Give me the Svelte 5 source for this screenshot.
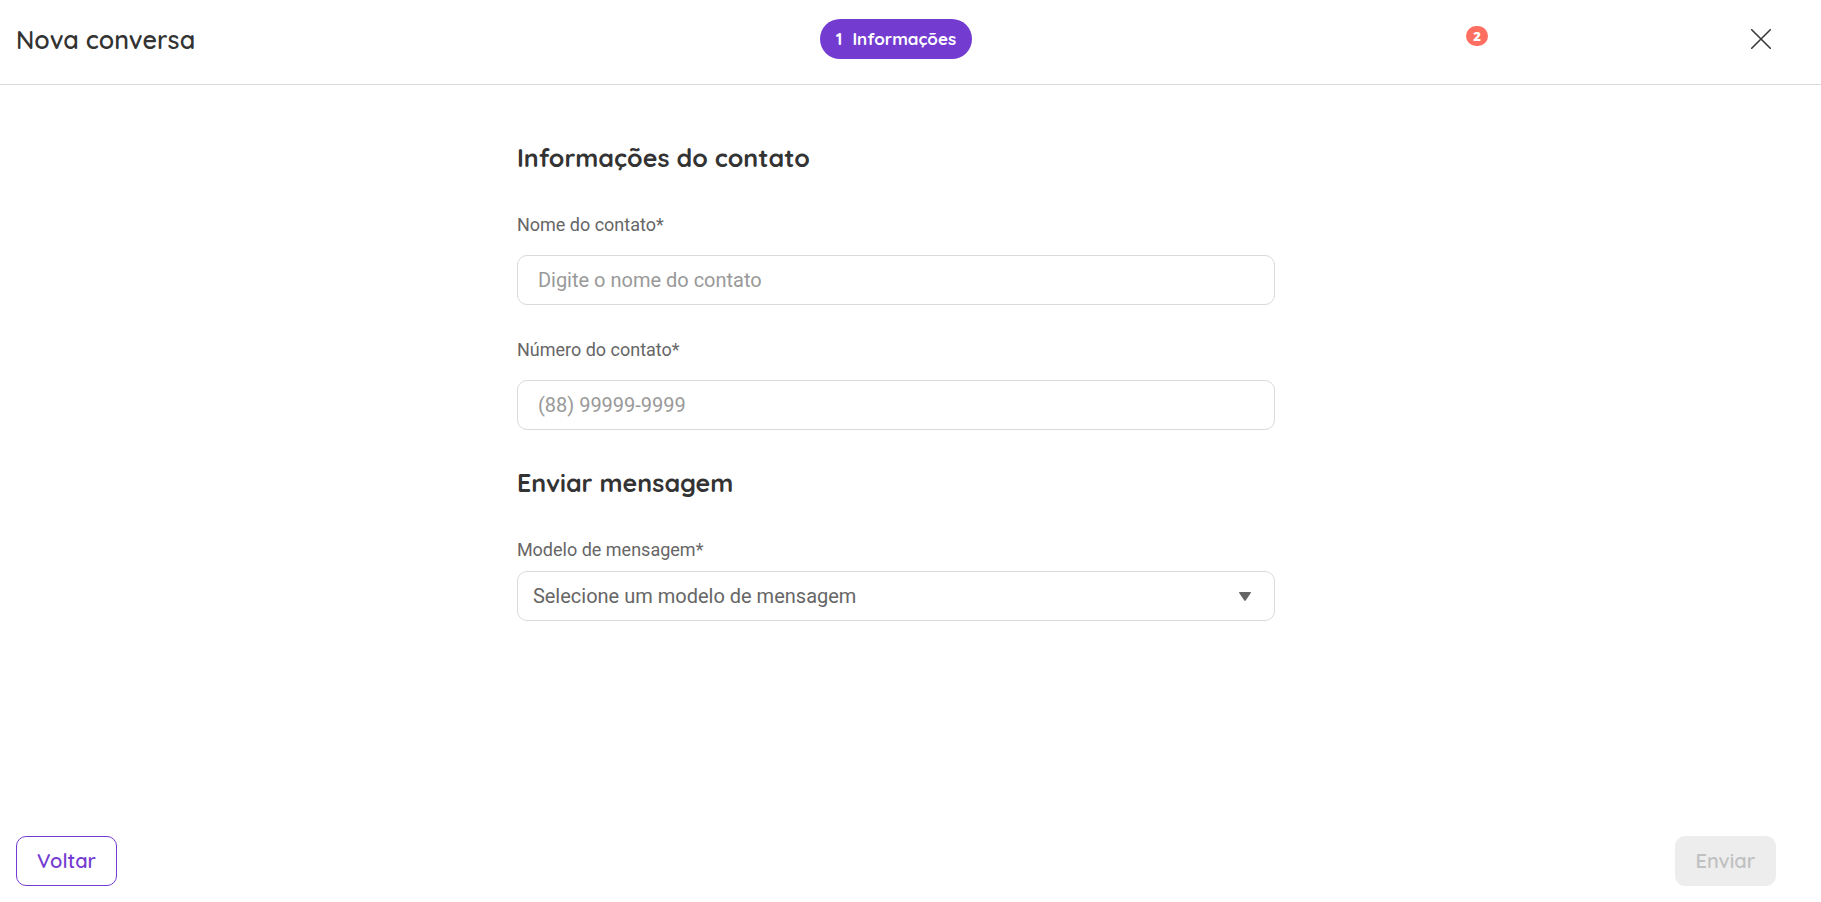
<script>
  let name = $state('');
  let phone = $state('');
  let template = $state('');
  const ready = $derived(name !== '' && phone !== '' && template !== '');
</script>

<div class="page">
  <header class="topbar">
    <h1>Nova conversa</h1>
    <div class="step"><span>1</span><span>Informações</span></div>
    <div class="tools">
      <span class="badge">2</span>
      <button class="close" type="button" aria-label="Fechar">
        <svg viewBox="0 0 20 20" width="20" height="20" aria-hidden="true">
          <path d="M.7.7 19.3 19.3M19.3.7.7 19.3" fill="none" stroke="#3a3a3a" stroke-width="1.6" stroke-linecap="round" />
        </svg>
      </button>
    </div>
  </header>

  <main>
    <form id="conversation">
      <section>
        <h2>Informações do contato</h2>
        <div class="field">
          <label for="name">Nome do contato*</label>
          <input id="name" type="text" placeholder="Digite o nome do contato" bind:value={name} />
        </div>
        <div class="field">
          <label for="phone">Número do contato*</label>
          <input id="phone" type="tel" placeholder="(88) 99999-9999" bind:value={phone} />
        </div>
      </section>
      <section>
        <h2>Enviar mensagem</h2>
        <div class="field compact">
          <label for="template">Modelo de mensagem*</label>
          <div class="select">
            <select id="template" bind:value={template}>
              <option value="">Selecione um modelo de mensagem</option>
            </select>
            <svg viewBox="0 0 12 9" width="12" height="9" aria-hidden="true">
              <path d="M0.5 0H11.5Q12.3 0.3 11.8 1L6.7 8.5Q6 9.3 5.3 8.5L0.2 1Q-0.3 0.3 0.5 0Z" fill="#666" />
            </svg>
          </div>
        </div>
      </section>
    </form>
  </main>

  <footer>
    <button class="back" type="button">Voltar</button>
    <button class="send" type="submit" form="conversation" disabled={!ready}>Enviar</button>
  </footer>
</div>

<style>
  :global(body) {
    margin: 0;
    background: #fff;
  }
  .page {
    --display: Quicksand, Lato, sans-serif;
    --purple: #743bd1;
    --line: #dadada;
    display: flex;
    flex-direction: column;
    min-height: 100vh;
    color: #333;
    font-family: Roboto, sans-serif;
  }
  .page :is(header, main, footer) {
    box-sizing: border-box;
    padding-left: 16px;
    padding-right: 45px;
  }
  .topbar {
    display: grid;
    grid-template-columns: 1fr auto 1fr;
    align-items: start;
    padding-top: 19px;
    padding-bottom: 25px;
    border-bottom: 1px solid var(--line);
  }
  h1,
  h2 {
    margin: 0;
    font-family: var(--display);
    font-size: 25px;
    line-height: 32px;
  }
  h1 {
    padding-top: 5px;
    font-weight: 600;
  }
  h2 {
    margin-bottom: 39px;
    font-weight: 700;
  }
  .step {
    display: flex;
    align-items: center;
    justify-content: center;
    gap: 10px;
    box-sizing: border-box;
    min-width: 152px;
    height: 40px;
    padding: 0 14px;
    border-radius: 20px;
    background: var(--purple);
    color: #fff;
    font: 700 17px/24px var(--display);
  }
  .tools {
    display: flex;
    justify-content: flex-end;
    gap: 258px;
  }
  .badge {
    box-sizing: border-box;
    height: 20px;
    min-width: 22px;
    margin-top: 7px;
    border-radius: 10px;
    background: #ff6f61;
    color: #fff;
    font: 800 13px/20px "Open Sans", sans-serif;
    text-align: center;
  }
  button {
    font: 600 20px/24px var(--display);
  }
  .close {
    display: grid;
    place-items: center;
    width: 30px;
    height: 40px;
    padding: 0;
    border: 0;
    background: none;
  }
  main {
    flex: 1;
    padding-top: 57px;
  }
  form {
    width: 43.08%;
    margin: 0 auto;
  }
  section + section {
    margin-top: 37px;
  }
  .field {
    display: flex;
    flex-direction: column;
    gap: 18px;
  }
  .field + .field {
    margin-top: 33px;
  }
  .compact {
    gap: 9px;
  }
  label {
    color: #666;
    font-size: 18px;
    line-height: 24px;
  }
  input,
  select {
    box-sizing: border-box;
    width: 100%;
    height: 50px;
    padding: 0 20px;
    border: 1px solid var(--line);
    border-radius: 10px;
    background: #fff;
    color: #666;
    font: 400 20px/24px Roboto, sans-serif;
  }
  input::placeholder {
    color: #999;
    opacity: 1;
  }
  .select {
    display: grid;
    align-items: center;
  }
  .select > * {
    grid-area: 1 / 1;
  }
  select {
    appearance: none;
    padding: 0 15px;
  }
  .select svg {
    justify-self: end;
    margin-right: 24px;
    pointer-events: none;
  }
  footer {
    display: flex;
    justify-content: space-between;
    padding-bottom: 16px;
  }
  .back,
  .send {
    min-width: 101px;
    height: 50px;
    padding: 0 20px;
    border: 1px solid var(--purple);
    border-radius: 10px;
    background: #fff;
    color: var(--purple);
  }
  .send:disabled {
    border-color: #ededed;
    background: #ededed;
    color: #c0c0c0;
  }
</style>
